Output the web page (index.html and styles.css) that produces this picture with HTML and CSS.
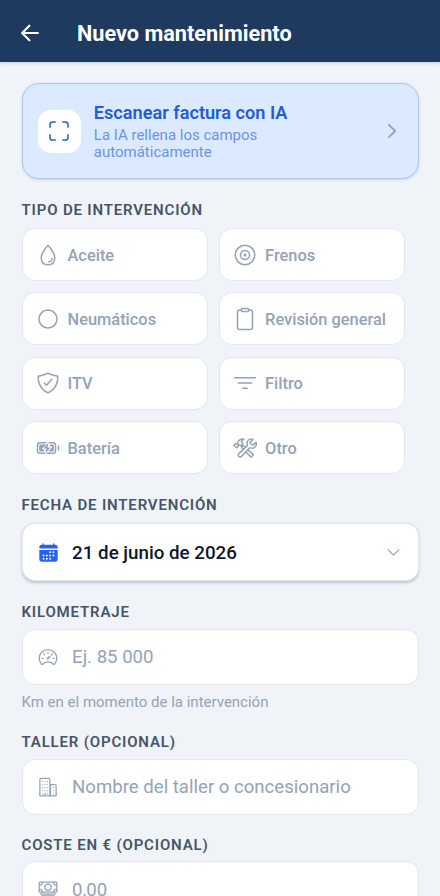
FILE: index.html
```html
<!DOCTYPE html>
<html lang="es">
<head>
<meta charset="utf-8">
<meta name="viewport" content="width=device-width, initial-scale=1">
<title>Nuevo mantenimiento</title>
<link rel="stylesheet" href="styles.css">
</head>
<body>
<header class="topbar">
  <svg class="icon back" viewBox="0 0 512 512"><path d="M244 400L100 256l144-144M120 256h292"/></svg>
  <h1 class="topbar-title">Nuevo mantenimiento</h1>
</header>
<main class="form">
  <section class="scan">
    <div class="scan-badge"><svg class="icon" viewBox="0 0 512 512"><path d="M336 448h56a56 56 0 0056-56v-56M448 176v-56a56 56 0 00-56-56h-56M176 448h-56a56 56 0 01-56-56v-56M64 176v-56a56 56 0 0156-56h56"/></svg></div>
    <div class="scan-text">
      <h2 class="scan-title">Escanear factura con IA</h2>
      <p class="scan-sub">La IA rellena los campos automáticamente</p>
    </div>
    <svg class="icon scan-chevron" viewBox="0 0 512 512"><path d="M184 112l144 144-144 144"/></svg>
  </section>

  <h3 class="label label-type">Tipo de intervención</h3>
  <div class="types">
    <div class="chip"><svg class="icon" viewBox="0 0 512 512"><path d="M400 320c0 88.37-55.63 144-144 144s-144-55.63-144-144c0-94.83 103.23-222.85 134.89-259.88a12 12 0 0118.23 0C296.77 97.15 400 225.17 400 320zM344 328a72 72 0 01-72 72"/></svg><span>Aceite</span></div>
    <div class="chip"><svg class="icon" viewBox="0 0 512 512"><circle cx="256" cy="256" r="208"/><circle cx="256" cy="256" r="96"/><circle class="solid" cx="256" cy="256" r="32"/></svg><span>Frenos</span></div>
    <div class="chip"><svg class="icon" viewBox="0 0 512 512"><circle cx="256" cy="256" r="192"/></svg><span>Neumáticos</span></div>
    <div class="chip"><svg class="icon" viewBox="0 0 512 512"><path d="M336 64h32a48 48 0 0148 48v320a48 48 0 01-48 48H144a48 48 0 01-48-48V112a48 48 0 0148-48h32"/><rect x="176" y="32" width="160" height="64" rx="26"/></svg><span>Revisión general</span></div>
    <div class="chip"><svg class="icon" viewBox="0 0 512 512"><path d="M336 176L225.2 304 176 255.8M463.1 112.37C373.68 96.33 336.71 84.45 256 48c-80.71 36.45-117.68 48.33-207.1 64.37C32.7 369.13 240.58 457.79 256 464c15.42-6.21 223.3-94.87 207.1-351.63z"/></svg><span>ITV</span></div>
    <div class="chip"><svg class="icon" viewBox="0 0 512 512"><path d="M32 144h448M112 256h288M208 368h96"/></svg><span>Filtro</span></div>
    <div class="chip"><svg class="icon" viewBox="0 0 512 512"><path d="M208 144H80a48 48 0 00-48 48v128a48 48 0 0048 48h98M284 144h84a48 48 0 0148 48v128a48 48 0 01-48 48H240M480 218v76"/><path class="solid-flat" d="M220 180H90q-22 0-22 22v108q0 22 22 22h80l13-46h-38q-18-8-8-24zM300 180h58q22 0 22 22v108q0 22-22 22h-96l78-90q8-18-10-24h-42z"/><path class="solid-flat" d="M265 138l-106 128h62l-22 108 108-130h-62z"/></svg><span>Batería</span></div>
    <div class="chip"><svg class="icon" viewBox="0 0 512 512"><path d="M436.67 184.11a27.17 27.17 0 01-38.3 0l-22.48-22.49a27.15 27.15 0 010-38.29l50.89-50.89a.85.85 0 00-.26-1.38C393.68 57 351.09 64.15 324.05 91c-25.88 25.69-27.35 64.27-17.87 98a27 27 0 01-7.67 27.14l-173 160.76a40.76 40.76 0 1057.57 57.54l162.15-173.3a27 27 0 0127.07-7.7c33.46 8.94 71.49 7.26 97.07-17.94 27.49-27.08 33.42-74.94 20.1-102.33a.85.85 0 00-1.36-.22zM224 284c-17.48-17-25.49-24.91-31-30.29a18.24 18.24 0 01-3.33-21.35 20.76 20.76 0 013.5-4.62l15.68-15.29a18.66 18.66 0 015.63-3.87 18.11 18.11 0 0120 3.62c5.45 5.29 15.43 15 33.41 32.52M317.07 291.3c40.95 38.1 90.62 83.27 110 99.41a13.46 13.46 0 01.94 19.92L394.63 444a14 14 0 01-20.29-.76c-16.53-19.18-61.09-67.11-99.27-107M23 193l32-32c15 15 27 23 43 18 10-5 10-15 5-28-8-28 14-49 41-70 27-19 64-21 90-13l-44 34c-12 13-9 37 8 53l15 15-44 44-15-15c-12-10-26-9-38 1-12 11-7 29-20 42-8 8-17 11-24 4L23 202q-4-5 0-9z"/></svg><span>Otro</span></div>
  </div>

  <h3 class="label label-date">Fecha de intervención</h3>
  <div class="field field-date">
    <svg class="icon calendar" viewBox="0 0 512 512"><path class="solid-flat" d="M32 160v-32a64 64 0 0164-64h16V48a16 16 0 0132 0v16h224V48a16 16 0 0132 0v16h16a64 64 0 0164 64v32zM32 192h448v224a64 64 0 01-64 64H96a64 64 0 01-64-64z"/><path class="calendar-days" d="M296 248h.1M376 248h.1M136 328h.1M216 328h.1M296 328h.1M376 328h.1M136 408h.1M216 408h.1M296 408h.1"/></svg>
    <span>21 de junio de 2026</span>
    <svg class="icon date-chevron" viewBox="0 0 512 512"><path d="M112 184l144 144 144-144"/></svg>
  </div>

  <h3 class="label label-km">Kilometraje</h3>
  <div class="field field-km">
    <svg class="icon" viewBox="0 0 512 512"><path class="solid-flat" d="M326.1 231.9l-47.5 75.5a31 31 0 01-7 7 30.11 30.11 0 01-35-49l75.5-47.5a10.23 10.23 0 0111.7 0 10.06 10.06 0 012.3 14z"/><path d="M256 64C132.3 64 32 164.2 32 287.9a223.18 223.18 0 0056.3 148.5c1.1 1.2 2.1 2.4 3.2 3.5a25.19 25.19 0 0037.1-.1 173.13 173.13 0 01254.8 0 25.19 25.19 0 0037.1.1l3.2-3.5A223.18 223.18 0 00480 287.9C480 164.2 379.7 64 256 64zM256 128v32M416 288h-32M128 288H96M165.49 197.49l-22.63-22.63M346.51 197.49l22.63-22.63"/></svg>
    <span>Ej. 85 000</span>
  </div>
  <p class="hint">Km en el momento de la intervención</p>

  <h3 class="label label-shop">Taller (opcional)</h3>
  <div class="field">
    <svg class="icon" viewBox="0 0 512 512"><path d="M176 416v64M80 32h192a32 32 0 0132 32v412a4 4 0 01-4 4H48V64a32 32 0 0132-32zM320 192h112a32 32 0 0132 32v256H320z"/><path class="windows" d="M112 112h.1M176 112h.1M240 112h.1M112 192h.1M176 192h.1M240 192h.1M112 272h.1M176 272h.1M240 272h.1M112 352h.1M176 352h.1M240 352h.1M112 432h.1M240 432h.1M400 272h.1M400 352h.1M400 432h.1"/></svg>
    <span>Nombre del taller o concesionario</span>
  </div>

  <h3 class="label label-cost">Coste en € (opcional)</h3>
  <div class="field">
    <svg class="icon" viewBox="0 0 512 512"><rect x="32" y="80" width="448" height="256" rx="16"/><path d="M64 384h384M96 432h320M480 160a80 80 0 01-80-80M32 160a80 80 0 0080-80M480 256a80 80 0 00-80 80M32 256a80 80 0 0180 80"/><circle cx="256" cy="208" r="80"/></svg>
    <span>0,00</span>
  </div>
</main>
</body>
</html>
```
FILE: styles.css
```css
* { box-sizing: border-box; margin: 0; padding: 0; }

html, body { height: 896px; overflow: hidden; }

body {
  display: flex;
  flex-direction: column;
  background: #f0f4f8;
  font-family: Roboto, "Liberation Sans", sans-serif;
  color: #94a3b8;
}

.icon {
  flex: none;
  width: 24px;
  height: 24px;
  fill: none;
  stroke: currentColor;
  stroke-width: 32;
  stroke-linecap: round;
  stroke-linejoin: round;
}
.solid { fill: currentColor; stroke: none; }
.solid-flat { fill: currentColor; stroke: none; }

.topbar {
  flex: none;
  display: flex;
  align-items: center;
  height: 62px;
  padding: 4px 17px 0;
  background: #1e3a5f;
  color: #fff;
  box-shadow: 0 1px 4px rgba(30, 58, 95, .22);
}
.back { width: 26px; height: 26px; margin-top: -1px; stroke-width: 42; }
.topbar-title {
  margin-left: 34px;
  padding-top: 1px;
  font-size: 21.7px;
  line-height: 28px;
  font-weight: 700;
}

.form { flex: none; padding: 21px 21.5px 0; }

.scan {
  display: flex;
  align-items: center;
  height: 96px;
  padding: 0 15px;
  border: 1.5px solid #aec5f1;
  border-radius: 17px;
  background: #dbeafe;
  box-shadow: 0 1px 3px rgba(37, 99, 235, .22);
}
.scan-badge {
  flex: none;
  display: grid;
  place-items: center;
  width: 43px;
  height: 43px;
  border-radius: 13px;
  background: #fff;
  color: #2563cf;
}
.scan-text { flex: 1; margin-left: 13.3px; padding-top: 1px; }
.scan-title {
  font-size: 18.15px;
  line-height: 22px;
  font-weight: 600;
  color: #235bd8;
}
.scan-sub {
  width: 210px;
  margin-top: 3px;
  font-size: 15px;
  line-height: 17.5px;
  color: #6d94e4;
}
.scan-chevron { width: 22px; height: 22px; stroke-width: 42; }

.label {
  height: 18px;
  font-size: 15px;
  line-height: 18px;
  font-weight: 600;
  letter-spacing: .83px;
  text-transform: uppercase;
  white-space: nowrap;
  color: #475569;
}
.label-type { margin: 21.5px 0 9.5px; }
.label-date { margin: 22px 0 9px; }
.label-km { margin: 22px 0 8px; }
.label-shop { margin: 22px 0 7.5px; }
.label-cost { margin: 21.5px 0 7px; }

.types {
  display: grid;
  grid-template-columns: 186px 186px;
  grid-auto-rows: 53px;
  gap: 11.4px 11.6px;
}
.chip {
  display: flex;
  align-items: center;
  gap: 8px;
  padding-left: 13px;
  border: 1.5px solid #e2e8f0;
  border-radius: 13px;
  background: #fff;
  font-size: 16.4px;
  line-height: 20px;
  font-weight: 500;
  white-space: nowrap;
}
.chip span { padding-top: 2px; }

.field {
  display: flex;
  align-items: center;
  height: 56px;
  padding: 0 15px;
  border: 1.5px solid #e2e8f0;
  border-radius: 13px;
  background: #fff;
  font-size: 18.6px;
  line-height: 22px;
  white-space: nowrap;
}
.field .icon { width: 20px; height: 20px; }
.field span { margin-left: 14.6px; padding-top: 1px; }
.field-km span { padding-top: 0; }
.field-date {
  height: 58px;
  color: #0f172a;
  font-size: 18.75px;
  font-weight: 500;
  box-shadow: 0 1.5px 3px rgba(30, 58, 95, .25);
}
.field .calendar { width: 21px; height: 21px; color: #2563eb; }
.field-date span { margin-left: 13.6px; padding-top: 2px; }
.calendar-days { stroke: #fff; stroke-width: 46; }
.field .date-chevron { width: 19px; height: 19px; margin-left: auto; color: #94a3b8; }
.windows { stroke-width: 30; }

.hint { margin-top: 8px; font-size: 15px; line-height: 18px; }
```
